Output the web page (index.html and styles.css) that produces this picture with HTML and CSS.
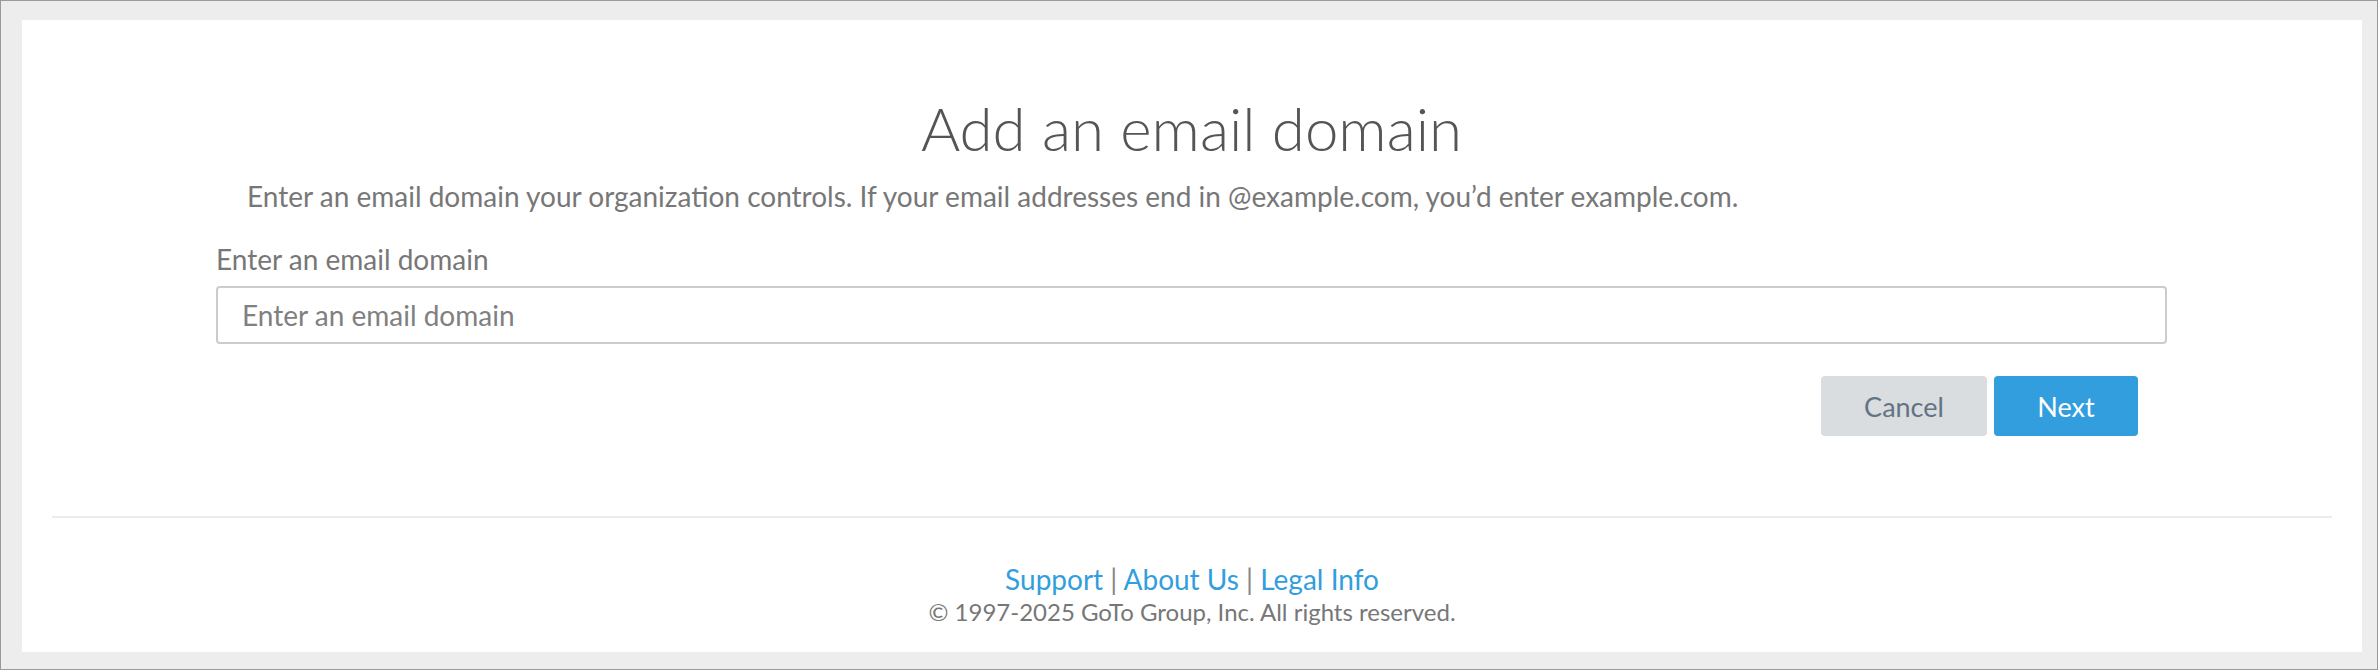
FILE: index.html
```html
<!DOCTYPE html>
<html lang="en">
<head>
<meta charset="utf-8">
<title>Add an email domain</title>
<link rel="stylesheet" href="styles.css">
</head>
<body>
<div class="frame">
  <div class="panel">
    <main class="content">
      <h1 class="title">Add an email domain</h1>
      <p class="desc">Enter an email domain your organization controls. If your email addresses end in @example.com, you’d enter example.com.</p>
      <label class="label" for="domain">Enter an email domain</label>
      <input class="input" id="domain" type="text" placeholder="Enter an email domain">
      <div class="actions">
        <button class="btn btn-cancel" type="button">Cancel</button>
        <button class="btn btn-next" type="button">Next</button>
      </div>
    </main>
    <hr class="divider">
    <footer class="footer">
      <div class="links"><a href="#">Support</a> <span class="sep">|</span> <a href="#">About Us</a> <span class="sep">|</span> <a href="#">Legal Info</a></div>
      <div class="copy">© 1997-2025 GoTo Group, Inc. All rights reserved.</div>
    </footer>
  </div>
</div>
</body>
</html>
```

FILE: styles.css
```css
html, body {
  margin: 0;
  padding: 0;
}
body {
  font-family: Lato, "Open Sans", sans-serif;
  color: #777;
}
.frame {
  box-sizing: border-box;
  width: 2378px;
  height: 670px;
  border: 1px solid #9a9a9a;
  background: #ededed;
  padding: 19px 15px 17px 21px;
  display: flex;
}
.panel {
  flex: 1;
  background: #fff;
  display: flex;
  flex-direction: column;
}
.content {
  padding: 0 195px 0 194px;
  display: flex;
  flex-direction: column;
}
.title {
  margin: 72px 0 0 0;
  font-size: 60px;
  font-weight: 300;
  line-height: 72px;
  color: #555;
  text-align: center;
}
.desc {
  margin: 16px 0 0 0;
  padding-left: 31px;
  font-size: 28px;
  line-height: 32px;
  color: #777;
}
.label {
  margin-top: 31px;
  font-size: 28px;
  line-height: 32px;
  color: #777;
}
.input {
  margin-top: 11px;
  box-sizing: border-box;
  height: 58px;
  width: 100%;
  border: 2px solid #ccc;
  border-radius: 4px;
  padding: 0 24px;
  font-family: Lato, sans-serif;
  font-size: 28px;
  color: #555;
  outline: none;
}
.input::placeholder {
  color: #808080;
}
.actions {
  margin-top: 32px;
  display: flex;
  justify-content: flex-end;
  gap: 7px;
  padding-right: 29px;
}
.btn {
  height: 60px;
  border: none;
  border-radius: 4px;
  font-family: Lato, sans-serif;
  font-size: 27px;
  cursor: pointer;
}
.btn-cancel {
  width: 166px;
  background: #d9dde0;
  color: #627385;
}
.btn-next {
  width: 144px;
  background: #329edd;
  color: #fff;
}
.divider {
  margin: 80px 30px 0 30px;
  border: none;
  border-top: 2px solid #ececec;
  height: 0;
}
.footer {
  margin-top: 46px;
  text-align: center;
}
.links {
  font-size: 28px;
  line-height: 30px;
  color: #888;
}
.links a {
  color: #329edd;
  text-decoration: none;
}
.copy {
  margin-top: 3px;
  font-size: 24px;
  line-height: 29px;
  color: #777;
}
```
